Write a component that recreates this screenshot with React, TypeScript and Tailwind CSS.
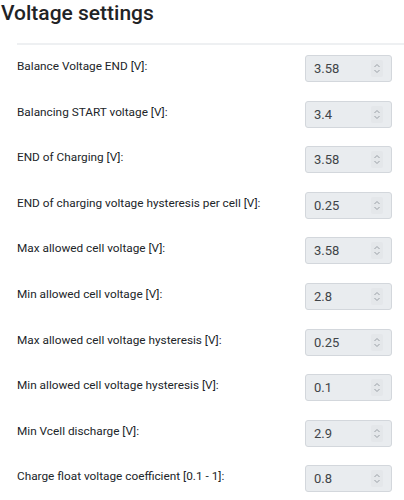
const settings = [
  { label: "Balance Voltage END [V]:", value: "3.58" },
  { label: "Balancing START voltage [V]:", value: "3.4" },
  { label: "END of Charging [V]:", value: "3.58" },
  { label: "END of charging voltage hysteresis per cell [V]:", value: "0.25" },
  { label: "Max allowed cell voltage [V]:", value: "3.58" },
  { label: "Min allowed cell voltage [V]:", value: "2.8" },
  { label: "Max allowed cell voltage hysteresis [V]:", value: "0.25" },
  { label: "Min allowed cell voltage hysteresis [V]:", value: "0.1" },
  { label: "Min Vcell discharge [V]:", value: "2.9" },
  { label: "Charge float voltage coefficient [0.1 - 1]:", value: "0.8" },
];

function SpinIcon() {
  return (
    <svg width="8" height="11" viewBox="0 0 8 11" fill="none" className="shrink-0">
      <path d="M1.5 4 L4 1.5 L6.5 4" stroke="#9aa0a6" strokeWidth="1" />
      <path d="M1.5 7 L4 9.5 L6.5 7" stroke="#9aa0a6" strokeWidth="1" />
    </svg>
  );
}

function NumberBox({ value }: { value: string }) {
  return (
    <div className="flex h-[27px] w-[87px] shrink-0 items-center justify-between rounded-[3px] border border-[#d3d7dc] bg-[#e9ecef] pl-[8px] pr-[8px]">
      <span className="text-[13px] leading-none text-[#3f4448]">{value}</span>
      <span className="flex h-[17px] w-[12px] items-center justify-center rounded-[2px] bg-[#e4e7ea]">
        <SpinIcon />
      </span>
    </div>
  );
}

export default function App() {
  return (
    <div className="h-[500px] w-[404px] overflow-hidden bg-white font-['Roboto',sans-serif] text-[#212529]">
      <h2 className="pl-[1px] pt-[1px] text-[21px] font-medium leading-[24px] text-[#1f2326]">
        Voltage settings
      </h2>
      <div className="ml-[17px] mt-[18px] border-t-2 border-[#eef0f2] pt-[10px] pr-[12px]">
        {settings.map((s) => (
          <div key={s.label} className="flex h-[45.6px] items-start justify-between">
            <span className="pt-[2px] text-[11.8px] leading-[18px]">{s.label}</span>
            <NumberBox value={s.value} />
          </div>
        ))}
      </div>
    </div>
  );
}
